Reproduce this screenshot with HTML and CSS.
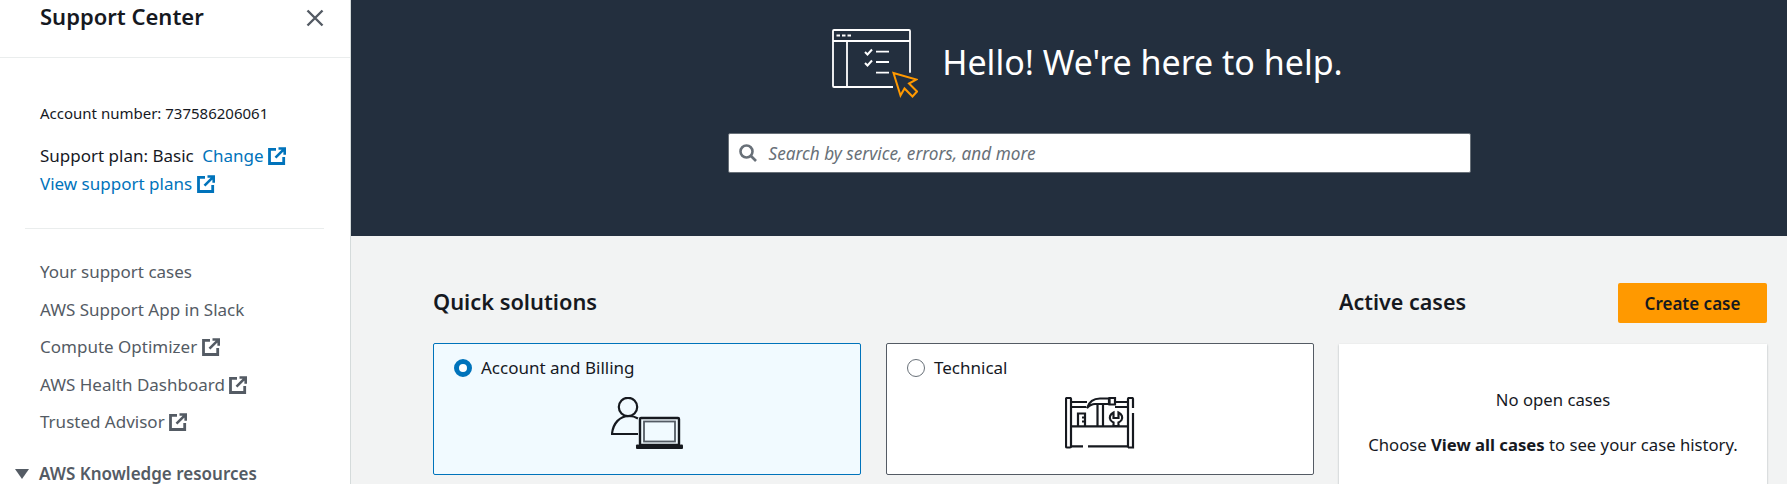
FILE: index.html
```html
<!DOCTYPE html>
<html lang="en">
<head>
<meta charset="utf-8">
<title>Support Center</title>
<link rel="stylesheet" href="styles.css">
</head>
<body>
<svg class="defs" width="0" height="0" aria-hidden="true">
  <symbol id="ext" viewBox="0 0 18 18">
    <path d="M8 2.300H1.500v14.200h14.200V10" fill="none" stroke="currentColor" stroke-width="2.800"/>
    <path d="M10.500 1.500h6.200v6.200M16.300 1.900 7.500 10.700" fill="none" stroke="currentColor" stroke-width="2.600"/>
  </symbol>
</svg>
<div class="app">
  <aside class="side">
    <div class="side-head">
      <h2 class="side-title">Support Center</h2>
      <svg class="close" width="18" height="18" viewBox="0 0 18 18" aria-hidden="true"><path d="M1.500 1.500l15 15M16.500 1.500l-15 15" fill="none" stroke="currentColor" stroke-width="2.400"/></svg>
    </div>
    <div class="account">
      <div class="acct-num">Account number: 737586206061</div>
      <div class="plan">Support plan: Basic <a class="link plan-change">Change <svg class="ext"><use href="#ext"/></svg></a></div>
      <div class="plan"><a class="link">View support plans <svg class="ext"><use href="#ext"/></svg></a></div>
    </div>
    <hr class="side-rule">
    <nav class="side-nav">
      <a class="nav-item">Your support cases</a>
      <a class="nav-item">AWS Support App in Slack</a>
      <a class="nav-item">Compute Optimizer <svg class="ext"><use href="#ext"/></svg></a>
      <a class="nav-item">AWS Health Dashboard <svg class="ext"><use href="#ext"/></svg></a>
      <a class="nav-item">Trusted Advisor <svg class="ext"><use href="#ext"/></svg></a>
    </nav>
    <div class="side-section"><span class="caret"></span>AWS Knowledge resources</div>
  </aside>
  <main class="main">
    <section class="hero">
      <div class="hero-top">
        <svg class="hero-icon" width="86" height="70" viewBox="0 0 86 70" aria-hidden="true">
          <g fill="none" stroke="#fff" stroke-width="1.800">
            <path d="M78 44.700V3q0-1-1-1H2Q1 2 1 3v55q0 1 1 1h59"/>
            <path d="M1 13h77M15 13v46"/>
            <path d="M4.500 7.500h3.500M10 7.500h3.500M15.500 7.500h3.500" stroke-width="2"/>
            <path d="M33 24l2.500 2.500 4.500-5M33 35l2.500 2.500 4.500-5" stroke-width="2"/>
            <path d="M44 23.700h13M44 34h13M44 44.700h13"/>
          </g>
          <path d="M61.500 45l7 22.500 4-7 8 8 4.500-5-8-8 7.500-4z" fill="none" stroke="#f90" stroke-width="2"/>
        </svg>
        <h1 class="hero-title">Hello! We're here to help.</h1>
      </div>
      <div class="search">
        <svg class="search-icon" width="18" height="18" viewBox="0 0 18 18" aria-hidden="true"><circle cx="7.500" cy="7.500" r="6" fill="none" stroke="currentColor" stroke-width="2.600"/><path d="M12 12l5 5" stroke="currentColor" stroke-width="2.600"/></svg>
        <span class="search-text">Search by service, errors, and more</span>
      </div>
    </section>
    <section class="content">
      <div class="col-left">
        <h2 class="h-sec">Quick solutions</h2>
        <div class="cards">
          <div class="card card-on">
            <div class="radio-row"><span class="radio radio-on"></span>Account and Billing</div>
            <div class="card-icon">
              <svg width="72" height="52" viewBox="0 0 72 52" aria-hidden="true">
                <g fill="none" stroke="#16191f" stroke-width="2.200">
                  <circle cx="17" cy="10" r="9.200"/>
                  <path d="M27 21.500q-4-2.500-9-2.500C9 19 2 26 1 37h26"/>
                  <rect x="29" y="21" width="39" height="27" rx="1" stroke-width="2.400"/>
                  <rect x="33" y="24.500" width="31" height="20" stroke="#545b64" stroke-width="1.800"/>
                </g>
                <rect x="25" y="47.500" width="47" height="4.500" rx="1" fill="#16191f"/>
              </svg>
            </div>
          </div>
          <div class="card">
            <div class="radio-row"><span class="radio"></span>Technical</div>
            <div class="card-icon">
              <svg width="70" height="52" viewBox="0 0 70 52" aria-hidden="true">
                <g fill="none" stroke="#16191f" stroke-width="2.200">
                  <rect x="1" y="1" width="5" height="49.500" rx="1"/>
                  <path d="M63 50.500V2q0-1 1-1h3q1 0 1 1v9M68 16v34.500h-5"/>
                  <path d="M6 5h16M6 10h15M50 5h13M50 10h13M6 29.300h57M6 49.300h12M23 49.300h40"/>
                  <path d="M13 29V16.500h7V29M20 20.500h-3M20 24.500h-3"/>
                  <path d="M22 11C24 5 29 1.500 35 1.500H44V7H30c-3 0-6 2-8 4z"/>
                  <path d="M32.500 7v22M38 7v22"/>
                  <path d="M44.500 1h5.500v6.500h-5.500z"/>
                  <path d="M48.500 15.500c-3.500 1.500-4.500 5-3 7.500 1 1.500 2 2 3 2.500V29h5v-3.500c1-.5 2-1 3-2.500 1.500-2.500.5-6-3-7.500v5.500h-5z"/>
                </g>
              </svg>
            </div>
          </div>
        </div>
      </div>
      <div class="col-right">
        <div class="right-head">
          <h2 class="h-sec h-active">Active cases</h2>
          <button class="btn" type="button">Create case</button>
        </div>
        <div class="panel">
          <p class="panel-line">No open cases</p>
          <p class="panel-line">Choose <b>View all cases</b> to see your case history.</p>
        </div>
      </div>
    </section>
  </main>
</div>
</body>
</html>
```
FILE: styles.css
```css
* { box-sizing: border-box; }
html, body { margin: 0; height: 484px; overflow: hidden; }
body { font-family: "Noto Sans", "Open Sans", sans-serif; font-size: 17px; color: #16191f; background: #f2f3f3; }
.defs { position: absolute; }
.app { display: flex; height: 484px; overflow: hidden; }

.side { flex: 0 0 351px; background: #fff; border-right: 1px solid #d5dbdb; }
.side-head { height: 58px; padding: 0 26px 0 40px; display: flex; justify-content: space-between; border-bottom: 1px solid #eaeded; }
.side-title { margin: 2px 0 0; font-size: 22px; line-height: 28px; font-weight: 600; }
.close { margin-top: 9px; color: #545b64; }
.account { padding: 44px 0 0 40px; }
.acct-num { font-size: 15px; line-height: 22px; }
.plan { line-height: 28px; }
.acct-num + .plan { margin-top: 18px; }
.link { color: #0073bb; }
.plan-change { margin-left: 4px; }
.ext { width: 18px; height: 18px; vertical-align: -3px; }
.side-rule { margin: 30px 26px 0 25px; border: 0; border-top: 1px solid #eaeded; }
.side-nav { padding: 32px 0 0 40px; display: flex; flex-direction: column; gap: 15.500px; }
.nav-item { color: #545b64; line-height: 22px; }
.side-section { margin: 33px 0 0 15px; font-weight: 600; color: #545b64; display: flex; align-items: center; gap: 10px; line-height: 16px; }
.caret { width: 0; height: 0; border: solid transparent; border-width: 10px 7px 0; border-top-color: #545b64; }

.main { flex: 1; min-width: 0; }
.hero { height: 236px; background: #232f3e; display: flex; flex-direction: column; align-items: center; padding-left: 60px; }
.hero-top { display: flex; align-items: center; height: 133px; padding-bottom: 10px; margin-left: -23px; }
.hero-icon { margin: 3px 24px 0 0; }
.hero-title { margin: 0; color: #fff; font-size: 34px; font-weight: 400; line-height: 40px; }
.search { width: 743px; height: 40px; background: #fff; border: 1px solid #687078; border-radius: 2px; display: flex; align-items: center; padding-left: 10px; gap: 12px; color: #687078; }
.search-icon { color: #687078; }
.search-text { font-style: italic; font-size: 17.200px; }

.content { display: flex; gap: 25px; padding: 46px 20px 0 82px; }
.col-left { flex: 0 0 881px; }
.col-right { flex: 0 0 428px; }
.h-sec { margin: 0; font-size: 21.800px; font-weight: 600; line-height: 40px; }
.h-active { font-size: 21.500px; }
.col-left .h-sec { margin-bottom: 21px; }
.cards { display: flex; gap: 25px; }
.card { flex: 1; height: 132px; background: #fff; border: 1px solid #545b64; border-radius: 2px; padding: 13px 20px; }
.card-on { background: #f1faff; border-color: #0073bb; }
.radio-row { display: flex; align-items: center; gap: 9px; line-height: 22px; }
.radio { width: 18px; height: 18px; border-radius: 50%; border: 1.500px solid #687078; background: #fff; }
.radio-on { border: 5px solid #0073bb; }
.card-icon { display: flex; justify-content: center; margin-top: 18px; }
.right-head { display: flex; justify-content: space-between; margin-bottom: 21px; }
.btn { width: 149px; height: 40px; margin-top: 1px; border: 0; border-radius: 2px; background: #f90; color: #16191f; font: 600 17px "Noto Sans", "Open Sans", sans-serif; }
.panel { height: 300px; background: #fff; box-shadow: 0 1px 2px rgba(0,28,36,.3); padding: 45px 20px 0; text-align: center; font-size: 16.700px; }
.panel-line { margin: 0 0 23px; line-height: 22px; }
```
